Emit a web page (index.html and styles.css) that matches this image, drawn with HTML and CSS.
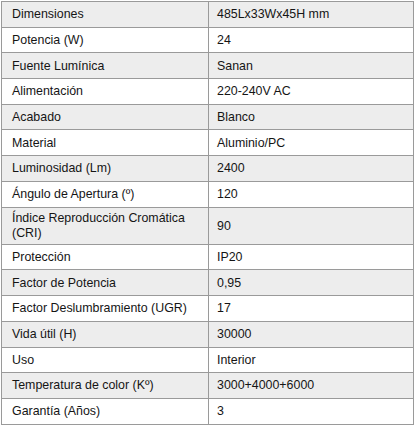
FILE: index.html
```html
<!DOCTYPE html>
<html lang="es">
<head>
<meta charset="utf-8">
<link rel="stylesheet" href="styles.css">
</head>
<body>
<table class="specs">
  <tr class="alt"><td class="k">Dimensiones</td><td class="v">485Lx33Wx45H mm</td></tr>
  <tr><td class="k">Potencia (W)</td><td class="v">24</td></tr>
  <tr class="alt"><td class="k">Fuente Lumínica</td><td class="v">Sanan</td></tr>
  <tr><td class="k">Alimentación</td><td class="v">220-240V AC</td></tr>
  <tr class="alt"><td class="k">Acabado</td><td class="v">Blanco</td></tr>
  <tr><td class="k">Material</td><td class="v">Aluminio/PC</td></tr>
  <tr class="alt"><td class="k">Luminosidad (Lm)</td><td class="v">2400</td></tr>
  <tr><td class="k">Ángulo de Apertura (º)</td><td class="v">120</td></tr>
  <tr class="alt tall"><td class="k">Índice Reproducción Cromática (CRI)</td><td class="v">90</td></tr>
  <tr><td class="k">Protección</td><td class="v">IP20</td></tr>
  <tr class="alt"><td class="k">Factor de Potencia</td><td class="v">0,95</td></tr>
  <tr><td class="k">Factor Deslumbramiento (UGR)</td><td class="v">17</td></tr>
  <tr class="alt"><td class="k">Vida útil (H)</td><td class="v">30000</td></tr>
  <tr><td class="k">Uso</td><td class="v">Interior</td></tr>
  <tr class="alt"><td class="k">Temperatura de color (Kº)</td><td class="v">3000+4000+6000</td></tr>
  <tr><td class="k">Garantía (Años)</td><td class="v">3</td></tr>
</table>
</body>
</html>
```
FILE: styles.css
```css
html, body {
  margin: 0;
  padding: 0;
  background: #ffffff;
}
body {
  padding: 1px 0 0 1px;
  font-family: "Liberation Sans", Arial, sans-serif;
  font-size: 12.4px;
  color: #151515;
}
.specs {
  border-collapse: collapse;
  width: 413px;
  table-layout: fixed;
}
.specs td {
  border: 1.5px solid #9a9a9a;
  height: 25.7px;
  padding: 0 8px;
  line-height: 14.3px;
  vertical-align: middle;
  box-sizing: border-box;
}
.specs td.k {
  width: 207px;
  padding-left: 10px;
  padding-right: 6px;
}
.specs tr.alt td {
  background: #ededed;
}
.specs tr.tall td {
  height: 37.3px;
}
```
